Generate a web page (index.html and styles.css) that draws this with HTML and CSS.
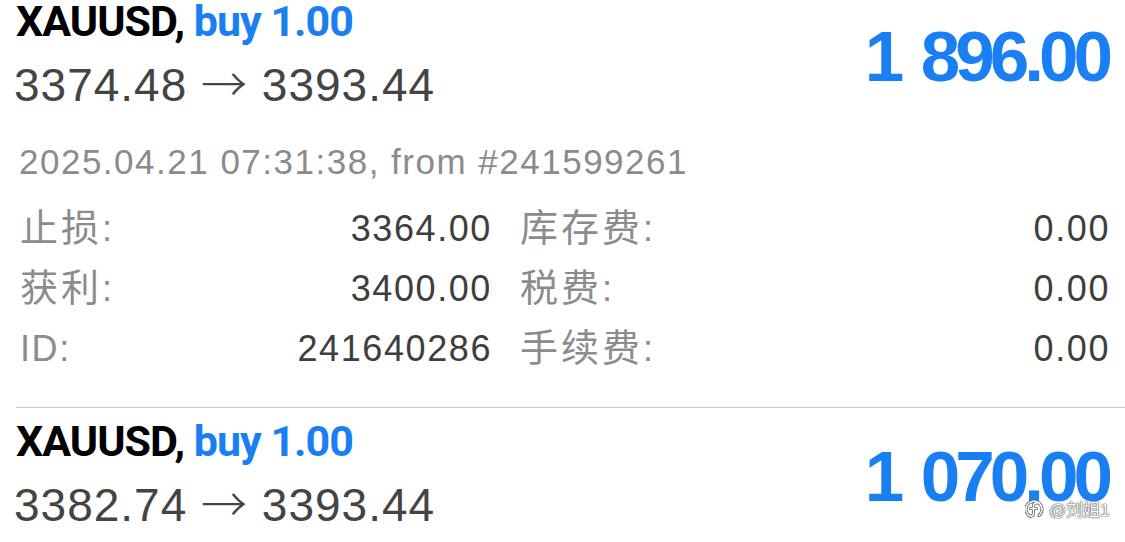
FILE: index.html
```html
<!DOCTYPE html>
<html lang="zh-CN">
<head>
    <meta charset="UTF-8">
    <meta name="viewport" content="width=device-width, initial-scale=1.0">
    <title>交易历史</title>
    <link rel="stylesheet" href="styles.css">
</head>
<body>

    <!-- 成交列表 -->
    <ul class="deals">
        <li class="deal">
            <div class="deal-head">
                <div class="deal-main">
                    <div class="deal-title"><span class="symbol">XAUUSD,</span> <span class="side">buy 1.00</span></div>
                    <div class="deal-prices">3374.48 <span class="arrow">→</span> 3393.44</div>
                </div>
                <div class="deal-profit">1 896.00</div>
            </div>
            <div class="deal-time">2025.04.21 07:31:38, from #241599261</div>
            <div class="deal-info">
                <span class="label"><span class="zh">止损</span>:</span>
                <span class="value">3364.00</span>
                <span class="label"><span class="zh">库存费</span>:</span>
                <span class="value">0.00</span>

                <span class="label"><span class="zh">获利</span>:</span>
                <span class="value">3400.00</span>
                <span class="label"><span class="zh">税费</span>:</span>
                <span class="value">0.00</span>

                <span class="label">ID:</span>
                <span class="value">241640286</span>
                <span class="label"><span class="zh">手续费</span>:</span>
                <span class="value">0.00</span>
            </div>
        </li>
        <li class="deal">
            <div class="deal-head">
                <div class="deal-main">
                    <div class="deal-title"><span class="symbol">XAUUSD,</span> <span class="side">buy 1.00</span></div>
                    <div class="deal-prices">3382.74 <span class="arrow">→</span> 3393.44</div>
                </div>
                <div class="deal-profit">1 070.00</div>
            </div>
        </li>
    </ul>

    <!-- 水印 -->
    <div class="watermark">
        <svg class="watermark-icon" width="19" height="21" viewBox="0 0 19 21">
            <g fill="none" stroke-linecap="round" stroke-linejoin="round">
                <path d="M5.5 18.5 A8 8 0 1 1 14 17.5 M12 5 C9.5 4.5 8.5 6 8.5 8.5 L8.5 15.5 C8.5 17.5 7 18.5 4.5 18 M5.5 10.5 L11.5 10.5" stroke="#666666" stroke-width="3.2"/>
                <path d="M5.5 18.5 A8 8 0 1 1 14 17.5 M12 5 C9.5 4.5 8.5 6 8.5 8.5 L8.5 15.5 C8.5 17.5 7 18.5 4.5 18 M5.5 10.5 L11.5 10.5" stroke="#ffffff" stroke-width="1.5"/>
            </g>
        </svg>
        <span>@刘姐1</span>
    </div>

</body>
</html>
```

FILE: styles.css
```css
body {
    margin: 0;
    background: #ffffff;
    font-family: "Liberation Sans", "Noto Sans CJK SC", sans-serif;
    overflow: hidden;
}
.deals {
    list-style: none;
    margin: -12px 0 0;
    padding: 0;
}
.deal {
    margin-left: 16px;
    padding: 12px 17px 28px 0;
    border-bottom: 1px solid #c9c9c9;
}
.deal-head {
    display: flex;
    justify-content: space-between;
    align-items: flex-start;
}
.deal-title {
    font-family: Roboto, "Liberation Sans", sans-serif;
    font-weight: 700;
    font-size: 43px;
    line-height: 42px;
    letter-spacing: -1px;
    color: #000000;
}
.side {
    color: #1a7ff3;
}
.deal-prices {
    margin: 16px 0 0 -2px;
    font-size: 46px;
    line-height: 52px;
    letter-spacing: 1px;
    color: #444444;
}
.arrow {
    font-family: "Noto Sans CJK SC", sans-serif;
    font-weight: 300;
    line-height: 1;
}
.deal-profit {
    margin-top: 21px;
    font-weight: 700;
    font-size: 71px;
    line-height: 71px;
    letter-spacing: -5px;
    word-spacing: 7px;
    color: #1a7ff3;
}
.deal-time {
    margin-top: 31px;
    padding-left: 3px;
    font-size: 35px;
    line-height: 40px;
    letter-spacing: 1.5px;
    color: #8b8b8b;
}
.deal-info {
    display: grid;
    grid-template-columns: 130px 310px 150px 1fr;
    column-gap: 30px;
    margin-top: 17px;
    padding-left: 4px;
    font-size: 36px;
    line-height: 60px;
    letter-spacing: 1.6px;
}
.label {
    color: #8c8c8c;
    white-space: nowrap;
}
.zh {
    font-size: 38px;
    line-height: 1;
    letter-spacing: 3px;
}
.value {
    margin-right: -2px;
    text-align: right;
    color: #3e3e3e;
}
.watermark {
    position: absolute;
    top: 496px;
    left: 1025px;
    display: flex;
    align-items: center;
    gap: 5px;
    font-size: 17px;
    color: #ffffff;
    text-shadow: 0 0 1px #555555, 0 0 1px #555555, 0 0 2px #777777;
}
```
